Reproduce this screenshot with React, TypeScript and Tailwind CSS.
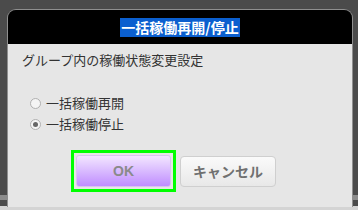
export default function App() {
  const font = { fontFamily: '"Noto Sans CJK JP", "Liberation Sans", sans-serif' };
  return (
    <div className="w-[358px] h-[210px] bg-[#4b4b4b] overflow-hidden relative" style={font}>
      <div className="absolute left-0 top-[195px] w-[358px] h-[5px] bg-[#8c8c8c]" />
      <div className="absolute left-0 top-[206px] w-[358px] h-[4px] bg-[#d4d4d4]" />
      <div className="relative ml-[7px] mt-[9px] w-[346px] h-[198px] rounded-t-[9px] border border-[#8f8f8f] border-b-0 overflow-hidden flex flex-col">
        <div className="h-[34px] bg-black flex items-center justify-center">
          <span className="bg-[#0b5fcf] text-white font-bold text-[14px] leading-[19px] px-[1px]">
            一括稼働再開/停止
          </span>
        </div>
        <div className="flex-1 bg-[#e6e6e6] flex flex-col">
          <p className="mt-[7px] ml-[14px] text-[13px] text-[#333] leading-[18px]">
            グループ内の稼働状態変更設定
          </p>
          <div className="mt-[25px] ml-[22px] flex flex-col gap-[3px] text-[13px] text-[#333] leading-[18px]">
            <label className="flex items-center gap-[5px]">
              <span className="w-[11px] h-[11px] rounded-full border border-[#b0b0b0] bg-[#f4f4f4]" />
              一括稼働再開
            </label>
            <label className="flex items-center gap-[5px]">
              <span className="w-[11px] h-[11px] rounded-full border border-[#b0b0b0] bg-[#f4f4f4] flex items-center justify-center">
                <span className="w-[5px] h-[5px] rounded-full bg-[#666]" />
              </span>
              一括稼働停止
            </label>
          </div>
          <div className="mt-[17px] ml-[63px] flex items-center gap-[4px]">
            <div className="border-[3px] border-[#00ff00] p-[2px]">
              <button className="w-[95px] h-[32px] rounded-[3px] border border-[#d8c4f0] bg-gradient-to-b from-[#f3e6ff] to-[#c08cff] text-[#8a8a8a] font-bold text-[14px]" style={{ fontFamily: '"Liberation Sans", sans-serif' }}>
                OK
              </button>
            </div>
            <button className="w-[96px] h-[31px] rounded-[4px] border border-[#cfcfcf] bg-gradient-to-b from-[#fafafa] to-[#e8e8e8] text-[#707070] font-bold text-[14px]">
              キャンセル
            </button>
          </div>
        </div>
      </div>
    </div>
  );
}
